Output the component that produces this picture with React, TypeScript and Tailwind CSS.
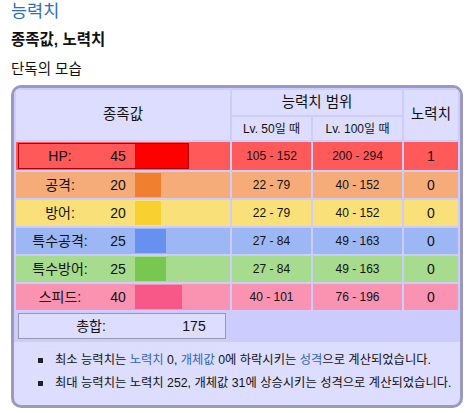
import React from "react";

type Stat = { label: string; value: number; bar: number; bg: string; barColor: string; l50: string; l100: string; ev: string; hl?: boolean };

const stats: Stat[] = [
  { label: "HP:", value: 45, bar: 53, bg: "bg-[#ff5959]", barColor: "bg-[#ff0000]", l50: "105 - 152", l100: "200 - 294", ev: "1", hl: true },
  { label: "공격:", value: 20, bar: 26, bg: "bg-[#f5ac78]", barColor: "bg-[#f08030]", l50: "22 - 79", l100: "40 - 152", ev: "0" },
  { label: "방어:", value: 20, bar: 26, bg: "bg-[#fae078]", barColor: "bg-[#f8d030]", l50: "22 - 79", l100: "40 - 152", ev: "0" },
  { label: "특수공격:", value: 25, bar: 31, bg: "bg-[#9db7f5]", barColor: "bg-[#6890f0]", l50: "27 - 84", l100: "49 - 163", ev: "0" },
  { label: "특수방어:", value: 25, bar: 31, bg: "bg-[#a7db8d]", barColor: "bg-[#78c850]", l50: "27 - 84", l100: "49 - 163", ev: "0" },
  { label: "스피드:", value: 40, bar: 47, bg: "bg-[#fa92b2]", barColor: "bg-[#f85888]", l50: "40 - 101", l100: "76 - 196", ev: "0" },
];

const font = { fontFamily: '"Liberation Sans", "Noto Sans CJK KR", sans-serif' };

function StatInner({ s }: { s: Stat }) {
  return (
    <>
      <span className="w-[82px] text-center text-[14px] leading-none">{s.label}</span>
      <span className="w-[34px] text-center text-[14px] leading-none">{s.value}</span>
      <span className={`h-[24px] ${s.barColor}`} style={{ width: s.bar }} />
    </>
  );
}

export default function App() {
  return (
    <div className="w-[468px] h-[413px] bg-white text-[#111]" style={font}>
      <div className="pl-[11px]">
        <div className="h-[22px] flex items-center text-[17.5px] text-[#2a6fba]">능력치</div>
        <div className="mt-[7px] h-[22px] flex items-center text-[15.5px] font-bold">종족값, 노력치</div>
        <div className="mt-[9px] h-[20px] flex items-center text-[14.5px]">단독의 모습</div>
      </div>
      <div className="ml-[11px] mt-[5px] w-[452px] border-[3px] border-[#9a9ac0] rounded-[10px] overflow-hidden bg-[#ddddff]">
        <div className="grid grid-cols-[214px_79px_89px_54px] gap-[2px] p-[2px] bg-[#ccccff]">
          <div className="row-span-2 bg-[#ddddff] flex items-center justify-center text-[14.5px]">종족값</div>
          <div className="col-span-2 h-[25px] bg-[#ddddff] flex items-center justify-center text-[14.5px]">능력치 범위</div>
          <div className="row-span-2 bg-[#ddddff] flex items-center justify-center text-[14.5px]">노력치</div>
          <div className="h-[23px] bg-[#ddddff] flex items-center justify-center text-[12px]">Lv. 50일 때</div>
          <div className="h-[23px] bg-[#ddddff] flex items-center justify-center text-[12px]">Lv. 100일 때</div>
          {stats.map((s) => (
            <React.Fragment key={s.label}>
              <div className={`${s.bg} flex`}>
                {s.hl ? (
                  <div className="my-[1px] ml-[2px] flex items-center border border-[#b00000]">
                    <StatInner s={s} />
                  </div>
                ) : (
                  <div className="py-[1px] pl-[3px] flex items-center">
                    <StatInner s={s} />
                  </div>
                )}
              </div>
              <div className={`${s.bg} flex items-center justify-center text-[12px]`}>{s.l50}</div>
              <div className={`${s.bg} flex items-center justify-center text-[12px]`}>{s.l100}</div>
              <div className={`${s.bg} flex items-center justify-center text-[14px]`}>{s.ev}</div>
            </React.Fragment>
          ))}
          <div className="col-span-4 py-[1px] pl-[2px]">
            <div className="w-[208px] h-[26px] flex items-center border border-[#9999aa] bg-[#ddddff] text-[14px]">
              <span className="w-[144px] text-center">총합:</span>
              <span className="flex-1 text-center">175</span>
            </div>
          </div>
        </div>
        <ul className="pt-[7px] pb-[10px] text-[12.3px]">
          <li className="h-[23px] flex items-center">
            <span className="ml-[24px] mr-[12px] w-[5px] h-[5px] bg-[#222] shrink-0" />
            <span className="whitespace-nowrap">
              최소 능력치는 <span className="text-[#3366bb]">노력치</span> 0, <span className="text-[#3366bb]">개체값</span> 0에 하락시키는 <span className="text-[#3366bb]">성격</span>으로 계산되었습니다.
            </span>
          </li>
          <li className="h-[23px] flex items-center">
            <span className="ml-[24px] mr-[12px] w-[5px] h-[5px] bg-[#222] shrink-0" />
            <span className="whitespace-nowrap">최대 능력치는 노력치 252, 개체값 31에 상승시키는 성격으로 계산되었습니다.</span>
          </li>
        </ul>
      </div>
    </div>
  );
}
